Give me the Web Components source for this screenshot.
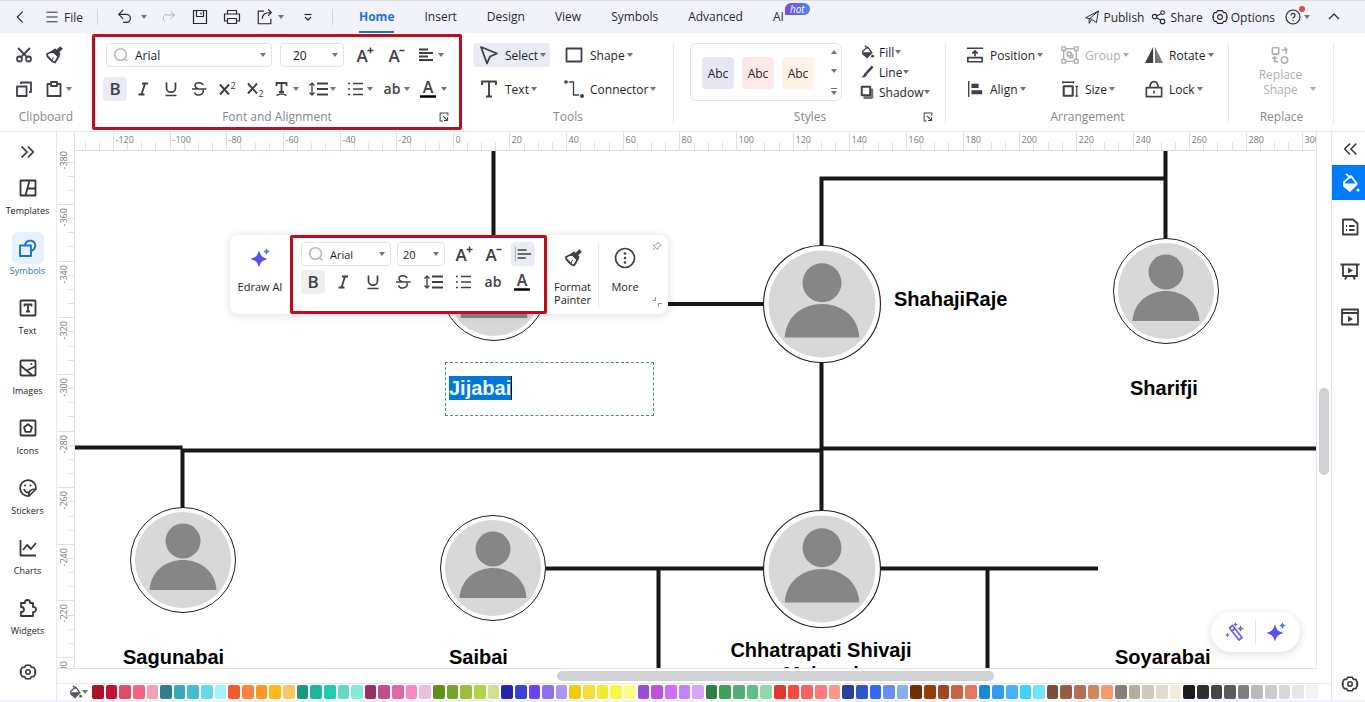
<!DOCTYPE html>
<html lang="en">
<head>
<meta charset="utf-8">
<meta name="viewport" content="width=device-width, initial-scale=1">
<title>Family tree - Edraw</title>
<style>
  html, body {
    height: 100%;
    margin: 0;
  }

  body {
    color: #26272b;
    font-family: 'Open Sans', 'Liberation Sans', sans-serif;
    font-size: 12px;
    overflow: hidden;
  }
</style>
</head>
<body>
<app-shell></app-shell>

<script>
const ICONS = {
  back: '<path d="M13 4 7 10l6 6" stroke-width="1.2"/>',
  menu: '<path d="M3 4h14M3 10h14M3 16h14" stroke-width="1.2"/>',
  undo: '<path d="M8 2 3 7l5 5M3 7h8.500a4.500 4.500 0 0 1 0 9H8" stroke-width="1.300"/>',
  redo: '<path d="M12 3l5 4.500-5 4.500M17 7.500H9a4 4 0 0 0-4 7.500" stroke-width="1.200"/>',
  save: '<path d="M3.500 3.500h13v13h-13zM6.500 3.500v6h7v-6M11 5.500v2" stroke-width="1.200"/>',
  print: '<path d="M5.500 7V3.500h9V7M5 14H2.500V7h15v7H15M5.500 11.500h9v5h-9z" stroke-width="1.200"/>',
  export: '<path d="M9 3.500H2.500v14h14V12M7 12c0-5 3-7 9-7M13.500 1.500 17 5l-3.500 3.500" stroke-width="1.300"/>',
  customize: '<path d="M6.500 7.500h7" stroke-width="1.200"/><path d="m7 10 3 3 3-3" stroke-width="1.200"/>',
  publish: '<path d="M2 11 18 2.500 15.500 17 9 12.500zM18 2.500 6.500 12.500V18l3-5" stroke-width="1.200"/>',
  share: '<circle cx="4.500" cy="9.500" r="2.800" stroke-width="1.400"/><circle cx="14.500" cy="4.500" r="2.300" stroke-width="1.400"/><circle cx="14.500" cy="15.500" r="2.800" stroke-width="1.400"/><path d="m7.500 8.500 5-2.500M7 11l5 3" stroke-width="1.400"/>',
  gear: '<path d="M7.500 2.500h5l1.300 2.300h2.700L18.500 9l-1.200 1 1.200 1-2 4.200h-2.700l-1.300 2.300h-5l-1.300-2.300H3.500L1.500 11l1.200-1-1.200-1 2-4.200h2.700z"/><circle cx="10" cy="10" r="2.500"/>',
  options: '<path d="M7 2h6l1.300 2.500h2.900L19 9l-1.200 1 1.200 1-1.800 4.500h-2.900L13 18H7l-1.300-2.500H2.800L1 11l1.200-1L1 9l1.800-4.500h2.900z" stroke-width="1.400"/><circle cx="10" cy="10" r="3" stroke-width="1.400"/>',
  help: '<circle cx="10" cy="10" r="7" stroke-width="1.200"/><path d="M8 8.500c0-3 4.200-2.500 4 0 0 1.500-2 1.300-2 3M10 13v1" stroke-width="1.200"/>',
  up: '<path d="m5 12 5-5 5 5" stroke-width="1.200"/>',
  cut: '<circle cx="5.500" cy="14" r="2.500"/><circle cx="14.500" cy="14" r="2.500"/><path d="m4 3 9 9M16 3l-9 9" />',
  painter: '<path d="m3 9 6-3 5.500 5.500-3.500 6-2.500-1-5-5z"/><path d="m9 6 2-1.500 4.500 4.500-1 2.500z" fill="currentColor"/><path d="m13.500 6.500 4-4" stroke-width="3.800"/><path d="m8 15 1.500-3" stroke-width="1"/>',
  copy: '<path d="M3 7.500h9.500V17H3zM7 5V3.500h10V13h-2"/>',
  paste: '<path d="M7 5H3.500v12h13V5H13M7 3h6v4H7z"/>',
  search: '<circle cx="9.500" cy="9.500" r="6.500"/><path d="m14 14 3 3"/>',
  grow: '<text x="8" y="17" font-size="17" font-weight="600">A</text><path d="M13.500 5.500h6M16.500 2.500v6" stroke-width="1.500"/>',
  shrink: '<text x="8" y="17" font-size="17" font-weight="600">A</text><path d="M13.500 5.500h5" stroke-width="1.500"/>',
  align: '<path d="M3 4.500h9M3 8h14M3 11.500h9M3 15h14" stroke-width="1.800"/>',
  left: '<path d="M1.500 2v16" stroke="#a2a5b0" stroke-width="1"/><path d="M4 5.500h10M4 10h15M4 14.500h9"/>',
  bold: '<text x="10" y="16" font-size="17" font-weight="600">B</text>',
  italic: '<path d="M9 4.500h6M5.500 15.500h6M12 4.500l-3.500 11" stroke-width="1.800"/>',
  underline: '<path d="M5.500 3.500V9c0 5.500 9 5.500 9 0V3.500M4.500 16.500h11" stroke-width="1.700"/>',
  strike: '<path d="M14 6c-1-3-8-3.500-8 .5 0 1.500 1 2.500 3 3.500M14 11c2 5-7 7-8.500 2.500M3 10h14.500" stroke-width="1.500"/>',
  superscript: '<path d="m3 5.500 9 10M12 5.500l-9 10" stroke-width="1.900"/><text x="16" y="10" font-size="9">2</text>',
  subscript: '<path d="m3 4.500 9 10M12 4.500l-9 10" stroke-width="1.900"/><text x="16" y="18" font-size="9">2</text>',
  texteffect: '<path d="M5.500 7V4h10v3M10.500 4v9M8 13h5" stroke-width="1.800"/><path d="M5.500 16.500q5-3 10 0" stroke-width="1.500"/>',
  spacing: '<path d="M4 4v12M1.500 6.500 4 4l2.500 2.500M1.500 13.500 4 16l2.500-2.500" stroke-width="1.300"/><path d="M9 4.500h11M9 10h11M9 15.500h11"/>',
  list: '<path d="M3 4.500h2M3 10h2M3 15.500h2M8 4.500h10M8 10h10M8 15.500h10" stroke-width="1.600"/>',
  ab: '<text x="10" y="15" font-size="14" font-weight="600">ab</text>',
  fontcolor: '<text x="9" y="14" font-size="16" font-weight="600">A</text><path d="M1 17.500h16" stroke="#000" stroke-width="2.500"/>',
  select: '<path d="M2 2 18 8.500 11 11.500 8 18.500z"/>',
  text: '<path d="M3 6V2.500h14V6M10 2.500v15M7 17.500h6" stroke-width="1.900"/>',
  shape: '<path d="M2.500 3.500h15v13h-15z"/>',
  connector: '<circle cx="2" cy="3" r="1.800" fill="currentColor" stroke="none"/><circle cx="18" cy="17" r="2" fill="currentColor" stroke="none"/><path d="M5 3h4.500v13H15" stroke-width="1.300"/>',
  fill: '<path d="m4 9 7-6 6 8-7 7-6-5z"/><path d="M3 10.500h14l-7 7.500z" fill="currentColor" stroke="none"/><path d="m7 1 4 4" /><circle cx="18" cy="16" r="2" fill="currentColor" stroke="none"/>',
  line: '<path d="m18 2-9 10" stroke-width="3.500"/><path d="M8 11c-3 0-1 4-6 6 4 1 8 0 8-4z" fill="currentColor" stroke="none"/>',
  shadow: '<path d="M17 5v13H5" stroke-width="4" stroke="#77797d"/><path d="M2.500 2.500h12v12h-12z" fill="#fff" stroke-width="2.800"/>',
  launcher: '<path d="M8 16.500H3.500v-13h13V8M8 8l8 8M16 10v6h-6" stroke-width="1.700"/>',
  position: '<path d="M1 2.500h18M10 11.500V6.500M7 8.500 10 5.500l3 3M2 13h16v4.500H2z" stroke-width="1.900"/>',
  alignobj: '<path d="M3 1v18" stroke-width="1.500"/><path d="M6 6.500h8M6 13.500h12" stroke-width="4.500"/>',
  group: '<path d="M3 3h14v14H3z" stroke-width="1.500"/><path d="M1 1h4v4H1zM15 1h4v4h-4zM1 15h4v4H1zM15 15h4v4h-4z" fill="#fff" stroke-width="1.500"/><path d="M7 7h4v4H7zM9 13h4V9" />',
  size: '<path d="M3 7h10v10.500H3z" stroke-width="2.300"/><path d="M2 2.500h12M2 1v3M14 1v3M17.500 7v11M16 7h3M16 18h3" stroke-width="1.400"/>',
  rotate: '<path d="M9 1v18H0z" fill="currentColor" stroke="none"/><path d="M11 1v18h9z" fill="#77797d" stroke="none"/>',
  lock: '<path d="M1.500 8.500h17v10h-17zM5.500 8.500c0-9 9-9 9 0M10 12v3"/>',
  replace: '<path d="M1.500 2h7v7h-7zM12 4.500h5M15 1.500l3 3M17 4.500V9M4 12v5.500h4M1.500 14 4 12l2.500 2"/><circle cx="15" cy="15.500" r="3.500"/>',
  expand: '<path d="m3 4 6 6-6 6M10 4l6 6-6 6" stroke-width="1.900"/>',
  collapse: '<path d="m10 4-6 6 6 6M17 4l-6 6 6 6" stroke-width="1.700"/>',
  templates: '<path d="M2.500 2.500h15v15h-15zM11.500 2.500l-4 15M9.500 10.500h8" stroke-width="1.800"/>',
  symbols: '<path d="M2 7.500h11v10.500H2zM7 7c1-7 12-5 10 2-.5 2-2 3.500-4 4" stroke-width="1.900"/>',
  textbox: '<rect x="2.500" y="2.500" width="15" height="15" rx="1"/><path d="M6.500 8.500V6.500h7v2M10 6.500v7M8 13.500h4"/>',
  images: '<rect x="2.500" y="2.500" width="15" height="15" rx="1"/><path d="m3 8 11 9M9 12.500l8-4"/><circle cx="13.500" cy="6" r="1" fill="currentColor" stroke="none"/>',
  icons: '<rect x="2.500" y="2.500" width="15" height="15" rx="1"/><path d="m10 6.200 4 3-1.500 4.600h-5L6 9.200z"/>',
  stickers: '<path d="M11 18a8 8 0 1 1 7-7zM11 18c-1-5 2-7 7-7M6 11c1 3 3 4 5 3" stroke-width="1.700"/><circle cx="7" cy="7.500" r="1" fill="currentColor" stroke="none"/><circle cx="12.500" cy="7.500" r="1" fill="currentColor" stroke="none"/>',
  charts: '<path d="M2.500 2v15.500H18M5 12l4-5 4 4 5-6"/>',
  widgets: '<path d="M3 5h4c-1-4 6-4 5 0h3v4c4-.5 4 5.500 0 5v4H3v-4c4 0 4-5 0-5z"/>',
  drop: '<path d="m4 9 7-6 6 8-7 7-6-5zM6 1l5 4" stroke-width="1.700"/><path d="M3 10.500h14l-7 7.500z" fill="currentColor" stroke="none"/><circle cx="18" cy="17" r="1.600" fill="currentColor" stroke="none"/>',
  page: '<path d="M3 2.500h10l4.500 4V17.500H3zM6 9h1M9 9h5.500M6 13h1M9 13h5.500"/>',
  present: '<path d="M.5 2.500h19M3 2.500v11.500h14V2.500M7 14l-2 3.500M13 14l2 3.500"/><path d="m8 5.500 5 3-5 3z" fill="currentColor" stroke="none"/>',
  play: '<path d="M2 2.500h16v15H2zM2 6h16"/><path d="m8 9 5 3-5 3z" fill="currentColor" stroke="none"/>',
  more: '<circle cx="10" cy="10" r="9.500" stroke-width="1.700"/><circle cx="10" cy="5.500" r="1.300" fill="currentColor" stroke="none"/><circle cx="10" cy="10" r="1.300" fill="currentColor" stroke="none"/><circle cx="10" cy="14.500" r="1.300" fill="currentColor" stroke="none"/>',
  sparkle: '<path d="M9 2.500c1.800 5.500 3 6.700 8.500 8.500-5.500 1.800-6.700 3-8.500 8.500C7.200 14 6 12.800.5 11 6 9.200 7.200 8 9 2.500z" fill="#5b50ee" stroke="none"/><path d="M16.500 0c.7 2.200 1.300 2.800 3.500 3.500-2.200.7-2.800 1.300-3.500 3.500-.7-2.200-1.300-2.800-3.500-3.500 2.200-.7 2.800-1.300 3.500-3.500z" fill="#4684dc" stroke="none"/>',
  wand: '<path d="m4.500 6 3-2.500L17 15.500l-3 2.500zM7 9l3-2.500" stroke="#6962d8" stroke-width="1.700"/><path d="m15.500 3 1 2.500 2.500 1-2.500 1-1 2.500-1-2.500-2.500-1 2.500-1zM2.500 10.500l.7 1.800 1.800.7-1.800.7-.7 1.800-.7-1.800L0 13l1.800-.7zM10.500 0l.7 1.800 1.800.7-1.800.7-.7 1.800-.7-1.800L8 2.500l1.800-.7z" fill="#7168d8" stroke="none"/>',
  pin: '<path d="M11 3.500 16.500 9l-2 .5-3 3-.5 3.500-7-7 3.500-.5 3-3zM7 13l-4 4" stroke-width="1.400"/>',
  resize: '<path d="M2 7.500h5.500V2M12.500 18v-5.500H18" stroke-width="1.600"/>'
}

const icon = (name, size = 20) =>
  /*html*/`<svg class="icon" viewBox="0 0 20 20" width="${size}" height="${size}" fill="none" stroke="currentColor" stroke-width="1.800" stroke-linejoin="round" aria-hidden="true">${ICONS[name]}</svg>`

const caret = () => /*html*/`<svg class="caret" viewBox="0 0 6 4" width="6" height="4" aria-hidden="true"><path d="M0 0h6L3 4z" fill="#717378"/></svg>`

const BASE = /*css*/`
  * { box-sizing: border-box; }
  button, select { font: inherit; color: inherit; margin: 0; border: 0; background: none; padding: 0; }
  .icon, .caret { display: block; flex: none; overflow: visible; }
  .icon text { fill: currentColor; stroke: none; text-anchor: middle; font-family: 'Open Sans', sans-serif; }
`

class ToolButton extends HTMLElement {

  constructor () {
    super()
    this.shadow = this.attachShadow({ mode: 'open' })
  }

  connectedCallback () {
    this.render()
  }

  render () {
    const label = this.getAttribute('label')
    const lines = label ? label.split('|').map(line => `<span>${line}</span>`).join('') : ''
    const title = this.getAttribute('title') || (label || '').replace('|', ' ')

    this.shadow.innerHTML =
    /*html*/`
    <style>
      ${BASE}
      :host { display: block; flex: none; min-width: 24px; color: #3f4045; }

      button {
        align-items: center;
        border-radius: 4px;
        display: flex;
        gap: 2px;
        height: 100%;
        min-height: 24px;
        min-width: 100%;
        white-space: nowrap;
      }

      :host([plain]) button { justify-content: center; }
      :host([active]) button { background: #e9ebf5; }
      :host([gray]) button { background: #efeff0; }
      :host([label]) button { gap: 6px; padding: 0 4px 0 6px; }
      :host([label]) .caret { margin-left: -4px; }
      :host([tight]) button { gap: 5px; padding: 0; min-height: 20px; }
      :host([stacked]) button { flex-direction: column; gap: 12px; justify-content: flex-start; padding: 0; }
      :host([stacked]) { font-size: 11px; }
      .label { color: #232428; display: flex; flex-direction: column; line-height: 13px; text-align: center; }
      :host([disabled]) { color: #aeafb3; }
      :host([disabled]) .label { color: #aeafb3; }
      :host([disabled]) .caret { opacity: .6; }
    </style>

    <button type="button" aria-label="${title}" ${this.hasAttribute('disabled') ? 'disabled' : ''}>
      ${icon(this.getAttribute('icon'), this.getAttribute('size') || 20)}
      ${lines ? `<span class="label">${lines}</span>` : ''}
      ${this.hasAttribute('caret') ? caret() : ''}
    </button>
    `
  }
}

class ComboBox extends HTMLElement {

  constructor () {
    super()
    this.shadow = this.attachShadow({ mode: 'open' })
  }

  connectedCallback () {
    const search = this.hasAttribute('search')

    this.shadow.innerHTML =
    /*html*/`
    <style>
      ${BASE}
      :host { display: block; flex: none; height: 24px; }

      label {
        align-items: center;
        border: 1px solid #e2e3e8;
        border-radius: 4px;
        display: grid;
        grid-template-columns: ${search ? '18px 1fr 6px' : '1fr 6px'};
        gap: 5px;
        height: 100%;
        padding: 0 5px 0 var(--inset, 5px);
      }

      .icon { color: #b9bbc0; }
      select { appearance: none; color: #1b1c1f; min-width: 0; outline: none; }
    </style>

    <label>
      ${search ? icon('search', 18) : ''}
      <select aria-label="${this.getAttribute('name')}"><option>${this.getAttribute('value')}</option></select>
      ${caret()}
    </label>
    `
  }
}

class TitleBar extends HTMLElement {

  constructor () {
    super()
    this.shadow = this.attachShadow({ mode: 'open' })
    this.tabs = ['Home', 'Insert', 'Design', 'View', 'Symbols', 'Advanced', 'AI']
  }

  connectedCallback () {
    this.shadow.innerHTML =
    /*html*/`
    <style>
      ${BASE}
      :host {
        align-items: stretch;
        background: #f2f3fa;
        border-top: 1px solid #dcdde5;
        display: flex;
        height: 33px;
      }

      .quick, .actions { align-items: center; display: flex; flex: none; }
      .quick { padding-left: 11px; width: 345px; }
      .quick button, .actions button { align-items: center; display: flex; height: 24px; }
      .file { gap: 4px; margin: 0 14px 0 15px; }
      .sep { background: #d5d6dd; height: 16px; width: 1px; }
      .undo { gap: 7px; margin-left: 18px; }
      .redo { color: #b0b2b9; margin-left: 14px; }
      .save { margin-left: 13px; }
      .print { margin-left: 12px; }
      .export { gap: 4px; margin-left: 14px; }
      .custom { margin: 0 14px; }

      nav { display: flex; flex: 1; gap: 30px; padding-left: 14px; }
      a { align-items: center; border-bottom: 2px solid transparent; color: inherit; display: flex; padding-top: 1px; position: relative; text-decoration: none; }
      a.current { border-color: #1a6fd0; color: #1b74d2; font-weight: 700; }

      .hot {
        background: linear-gradient(90deg, #7b4be0, #4a84ee);
        border-radius: 6px 6px 6px 0;
        color: #fff;
        font-size: 10px;
        font-style: italic;
        left: 12px;
        line-height: 12px;
        padding: 0 5px;
        position: absolute;
        top: 2px;
      }

      .actions { padding-right: 21px; }
      .actions button { gap: 3px; }
      .share { margin-left: 7px; }
      .options { margin-left: 9px; }
      .actions .help { gap: 1px; margin-left: 8px; position: relative; }
      .help i { background: #e2494d; border-radius: 3px; height: 6px; left: 16px; position: absolute; top: 1px; width: 6px; }
      .actions .fold { margin-left: 14px; }
    </style>

    <div class="quick">
      <button type="button" aria-label="Back">${icon('back', 18)}</button>
      <button type="button" class="file">${icon('menu', 16)}File</button>
      <span class="sep"></span>
      <button type="button" class="undo" aria-label="Undo">${icon('undo', 18)}${caret()}</button>
      <button type="button" class="redo" aria-label="Redo">${icon('redo', 16)}</button>
      <button type="button" class="save" aria-label="Save">${icon('save')}</button>
      <button type="button" class="print" aria-label="Print">${icon('print')}</button>
      <button type="button" class="export" aria-label="Export">${icon('export', 18)}${caret()}</button>
      <button type="button" class="custom" aria-label="Customize">${icon('customize')}</button>
      <span class="sep"></span>
    </div>

    <nav>
      ${this.tabs.map((tab, i) => `<a href="#${tab}" class="${i ? '' : 'current'}">${tab}${tab === 'AI' ? '<span class="hot">hot</span>' : ''}</a>`).join('')}
    </nav>

    <div class="actions">
      <button type="button">${icon('publish', 16)}Publish</button>
      <button type="button" class="share">${icon('share', 16)}Share</button>
      <button type="button" class="options">${icon('options', 16)}Options</button>
      <button type="button" class="help" aria-label="Help">${icon('help')}${caret()}<i></i></button>
      <button type="button" class="fold" aria-label="Collapse ribbon">${icon('up')}</button>
    </div>
    `
  }
}

class RibbonGroup extends HTMLElement {

  constructor () {
    super()
    this.shadow = this.attachShadow({ mode: 'open' })
  }

  connectedCallback () {
    this.shadow.innerHTML =
    /*html*/`
    <style>
      ${BASE}
      :host { display: flex; flex: none; flex-direction: column; height: 97px; padding-top: 10px; position: relative; }
      :host([marked]) { outline: 3px solid #c00d17; outline-offset: -3px; border-radius: 2px; margin-top: 1px; height: 96px; padding-top: 9px; }
      :host([rule]) { background: linear-gradient(#e8e9ee, #e8e9ee) right 10px / 1px 80px no-repeat; }
      .body { height: 58px; }
      .foot { align-items: center; color: #85878d; display: grid; grid-template-columns: 1fr auto 1fr; height: 16px; margin-top: 7px; padding-right: 12px; padding-left: 12px; }
      .foot button { color: #3f4045; grid-column: 3; justify-self: end; }
    </style>

    <div class="body"><slot></slot></div>
    <div class="foot">
      <span></span><span>${this.getAttribute('name')}</span>
      ${this.hasAttribute('launcher') ? `<button type="button" aria-label="${this.getAttribute('name')} settings">${icon('launcher', 12)}</button>` : ''}
    </div>
    `
  }
}

class RibbonBar extends HTMLElement {

  constructor () {
    super()
    this.shadow = this.attachShadow({ mode: 'open' })
  }

  connectedCallback () {
    this.shadow.innerHTML =
    /*html*/`
    <style>
      ${BASE}
      :host { background: #fff; border-bottom: 1px solid #e7e8ec; display: flex; height: 99px; overflow: hidden; }
      .clipboard { width: 92px; }
      .font { width: 370px; }
      .tools { width: 212px; }
      .styles { width: 272px; }
      .arrange { width: 283px; }
      .replace { width: 105px; }

      .grid { display: grid; gap: 10px 8px; justify-content: start; }
      .clipboard .grid { grid-template-columns: 24px 32px; padding-left: 12px; }
      .rows { display: flex; flex-direction: column; gap: 10px; padding-left: 11px; }
      .row { display: flex; gap: 4px; }
      .row.first { gap: 8px; padding-left: 3px; }
      .row tool-button[caret] { width: 33px; }
      .font-name { width: 166px; }
      .font-size { --inset: 12px; width: 64px; }
      .tools .grid { grid-template-columns: 77px auto; padding-left: 11px; }
      .tools tool-button { justify-self: start; }

      .styles-body { display: flex; gap: 18px; padding-left: 16px; }
      .gallery { border: 1px solid #e4e5ea; border-radius: 6px; display: flex; gap: 8px; height: 58px; padding: 13px 4px 0 11px; width: 152px; }
      .gallery > button { border-radius: 4px; color: #232428; height: 32px; width: 32px; }
      .arrows { align-items: center; display: flex; flex-direction: column; gap: 15px; margin: -7px 0 0 auto; }
      .arrows button { display: block; line-height: 0; }
      .arrows .flip { transform: rotate(180deg); }
      .arrows .all { border-top: 1px solid #717378; padding-top: 2px; }
      .effects { display: flex; flex-direction: column; margin-top: -1px; }

      .arrange .grid { grid-template-columns: 87px 76px auto; padding-left: 14px; }
      .replace-body { align-items: flex-end; display: flex; justify-content: center; padding-left: 12px; }
      .replace-body button { color: #aeafb3; font-size: 12px; line-height: 15px; }
      .replace-body .icon { margin: 3px auto 3px; }
      .replace-body .caret { margin: 0 0 6px 8px; opacity: .6; }
    </style>

    <ribbon-group class="clipboard" name="Clipboard">
      <div class="grid">
        <tool-button plain icon="cut" title="Cut"></tool-button>
        <tool-button icon="painter" title="Format painter"></tool-button>
        <tool-button plain icon="copy" title="Copy"></tool-button>
        <tool-button icon="paste" caret title="Paste"></tool-button>
      </div>
    </ribbon-group>

    <ribbon-group class="font" name="Font and Alignment" launcher marked>
      <div class="rows">
        <div class="row first">
          <combo-box class="font-name" search name="Font" value="Arial"></combo-box>
          <combo-box class="font-size" name="Font size" value="20"></combo-box>
          <tool-button plain icon="grow" title="Increase font size"></tool-button>
          <tool-button plain icon="shrink" title="Decrease font size"></tool-button>
          <tool-button icon="align" caret title="Alignment"></tool-button>
        </div>
        <div class="row">
          <tool-button plain active icon="bold" title="Bold"></tool-button>
          <tool-button plain icon="italic" title="Italic"></tool-button>
          <tool-button plain icon="underline" title="Underline"></tool-button>
          <tool-button plain icon="strike" title="Strikethrough"></tool-button>
          <tool-button plain icon="superscript" title="Superscript"></tool-button>
          <tool-button plain icon="subscript" title="Subscript"></tool-button>
          <tool-button icon="texteffect" caret title="Text effects"></tool-button>
          <tool-button icon="spacing" caret title="Line spacing"></tool-button>
          <tool-button icon="list" caret title="Bullets"></tool-button>
          <tool-button icon="ab" caret title="Change case"></tool-button>
          <tool-button icon="fontcolor" caret title="Font color"></tool-button>
        </div>
      </div>
    </ribbon-group>

    <ribbon-group class="tools" name="Tools" rule>
      <div class="grid">
        <tool-button active icon="select" label="Select" caret></tool-button>
        <tool-button icon="shape" label="Shape" caret></tool-button>
        <tool-button icon="text" label="Text" caret></tool-button>
        <tool-button icon="connector" label="Connector" caret></tool-button>
      </div>
    </ribbon-group>

    <ribbon-group class="styles" name="Styles" launcher rule>
      <div class="styles-body">
        <div class="gallery">
          <button type="button" style="background: #e7e6f4">Abc</button>
          <button type="button" style="background: #fde8e9">Abc</button>
          <button type="button" style="background: #fff3e4">Abc</button>
          <div class="arrows">
            <button type="button" class="flip" aria-label="Previous">${caret()}</button>
            <button type="button" aria-label="Next">${caret()}</button>
            <button type="button" class="all" aria-label="All styles">${caret()}</button>
          </div>
        </div>
        <div class="effects">
          <tool-button tight icon="fill" size="14" label="Fill" caret></tool-button>
          <tool-button tight icon="line" size="14" label="Line" caret></tool-button>
          <tool-button tight icon="shadow" size="14" label="Shadow" caret></tool-button>
        </div>
      </div>
    </ribbon-group>

    <ribbon-group class="arrange" name="Arrangement" rule>
      <div class="grid">
        <tool-button icon="position" size="18" label="Position" caret></tool-button>
        <tool-button disabled icon="group" size="18" label="Group" caret></tool-button>
        <tool-button icon="rotate" size="18" label="Rotate" caret></tool-button>
        <tool-button icon="alignobj" size="18" label="Align" caret></tool-button>
        <tool-button icon="size" size="18" label="Size" caret></tool-button>
        <tool-button icon="lock" size="18" label="Lock" caret></tool-button>
      </div>
    </ribbon-group>

    <ribbon-group class="replace" name="Replace" rule>
      <div class="replace-body">
        <button type="button" disabled>${icon('replace', 18)}Replace<br>Shape</button>
        ${caret()}
      </div>
    </ribbon-group>
    `
  }
}

class SideNav extends HTMLElement {

  constructor () {
    super()
    this.shadow = this.attachShadow({ mode: 'open' })
    this.items = ['Templates', 'Symbols', 'Text', 'Images', 'Icons', 'Stickers', 'Charts', 'Widgets']
  }

  connectedCallback () {
    this.shadow.innerHTML =
    /*html*/`
    <style>
      ${BASE}
      :host { border-right: 1px solid #e7e8ec; color: #36373b; display: flex; flex-direction: column; font-size: 9px; }
      button { align-items: center; display: flex; flex: none; flex-direction: column; height: 60px; line-height: 13px; width: 55px; }
      .toggle, .settings { height: 40px; justify-content: center; }
      .box { border-radius: 6px; display: grid; height: 32px; place-items: center; width: 32px; }
      .label { color: #1c1d20; }
      .current { color: #1b76bd; }
      .current .box { background: #e6f1fc; }
      .current .label { color: #1b76bd; }
    </style>

    <button type="button" class="toggle" aria-label="Expand">${icon('expand', 18)}</button>
    ${this.items.map(name => `
      <button type="button" class="${name === 'Symbols' ? 'current' : ''}">
        <span class="box">${icon(name === 'Text' ? 'textbox' : name.toLowerCase())}</span>
        <span class="label">${name}</span>
      </button>`).join('')}
    <button type="button" class="settings" aria-label="Settings">${icon('gear', 18)}</button>
    `
  }
}

class PanelRail extends HTMLElement {

  constructor () {
    super()
    this.shadow = this.attachShadow({ mode: 'open' })
  }

  connectedCallback () {
    this.shadow.innerHTML =
    /*html*/`
    <style>
      ${BASE}
      :host { border-left: 1px solid #e7e8ec; color: #3a3b40; display: flex; flex-direction: column; }
      button { display: grid; height: 45px; padding-left: 2px; place-items: center; width: 100%; }
      .toggle { height: 33px; }
      .settings { height: 32px; margin-top: auto; }
      .current { background: #007bff; color: #fff; height: 35px; margin-bottom: 4px; }
    </style>

    <button type="button" class="toggle" aria-label="Collapse">${icon('collapse', 18)}</button>
    <button type="button" class="current" aria-label="Fill">${icon('drop')}</button>
    <button type="button" aria-label="Page">${icon('page')}</button>
    <button type="button" aria-label="Presentation">${icon('present')}</button>
    <button type="button" aria-label="Slides">${icon('play')}</button>
    <button type="button" class="settings" aria-label="Settings">${icon('gear', 18)}</button>
    `
  }
}

class PageRuler extends HTMLElement {

  constructor () {
    super()
    this.shadow = this.attachShadow({ mode: 'open' })
  }

  connectedCallback () {
    this.observer = new ResizeObserver(() => this.render())
    this.observer.observe(this)
  }

  disconnectedCallback () {
    this.observer.disconnect()
  }

  // 20 units of the page are 56.64 pixels, with four ticks in each step
  render () {
    const vertical = this.hasAttribute('vertical')
    const first = Number(this.getAttribute('first'))
    const start = Number(this.getAttribute('start'))
    const length = vertical ? this.clientHeight : this.clientWidth
    let marks = ''

    for (let i = -4; start + i * 14.16 < length; i++) {
      const at = Math.round(start + i * 14.16)
      const major = i % 4 === 0
      const from = major ? 0 : 10

      if (at > 0) {
        marks += vertical ? `<path d="M${from} ${at}h18"/>` : `<path d="M${at} ${from}v18"/>`
      }

      if (major && at > -10) {
        const value = first + i * 5
        marks += vertical
          ? `<text transform="translate(9 ${at + 22}) rotate(-90)">${value}</text>`
          : `<text x="${at + 2}" y="10">${value}</text>`
      }
    }

    this.shadow.innerHTML =
    /*html*/`
    <style>
      :host { display: block; overflow: hidden; }
      svg { display: block; height: 100%; width: 100%; }
      g { transform: translate(.5px, .5px); }
      path { fill: none; stroke: #dfe0e4; }
      text { fill: #77797f; font-size: 9px; }
    </style>
    <svg><g>${marks}</g></svg>
    `
  }
}

class PersonAvatar extends HTMLElement {

  constructor () {
    super()
    this.shadow = this.attachShadow({ mode: 'open' })
  }

  connectedCallback () {
    this.shadow.innerHTML =
    /*html*/`
    <style>
      :host { display: block; height: 106px; width: 106px; }
      :host([large]) { height: 118px; width: 118px; }
      svg { display: block; height: 100%; width: 100%; }
    </style>
    <svg viewBox="-53 -53 106 106" role="img" aria-label="Person">
      <circle r="52.500" fill="#fff" stroke="#1b1c30"/>
      <circle r="48" fill="#d8d8d8"/>
      <circle cy="-19" r="17.500" fill="#868686"/>
      <path d="M-33.500 30C-31-10 31-10 33.500 30z" fill="#868686"/>
    </svg>
    `
  }
}

class FloatingToolbar extends HTMLElement {

  constructor () {
    super()
    this.shadow = this.attachShadow({ mode: 'open' })
  }

  connectedCallback () {
    this.shadow.innerHTML =
    /*html*/`
    <style>
      ${BASE}
      :host { background: #fff; border-radius: 8px; box-shadow: 0 1px 8px rgba(30, 32, 50, .16); display: flex; height: 79px; width: 438px; }
      .side { padding-top: 13px; width: 60px; }
      .format { border: 3px solid #c00d17; border-radius: 2px; display: flex; flex-direction: column; gap: 4px; padding: 4px 8px; width: 257px; }
      .row { display: flex; gap: 6px; }
      combo-box { font-size: 11px; }
      .font-name { width: 90px; }
      .font-size { width: 48px; }
      .painter { border-right: 1px solid #e8e9ee; height: 64px; margin-top: 8px; padding-top: 5px; width: 52px; }
      .more { padding-top: 13px; width: 52px; }
      .corner { color: #85878d; display: flex; flex-direction: column; justify-content: space-between; padding: 5px 0 6px; }
      .corner button { display: block; }
    </style>

    <div class="side"><tool-button stacked icon="sparkle" label="Edraw AI"></tool-button></div>
    <div class="format">
      <div class="row">
        <combo-box class="font-name" search name="Font" value="Arial"></combo-box>
        <combo-box class="font-size" name="Font size" value="20"></combo-box>
        <tool-button plain icon="grow" title="Increase font size"></tool-button>
        <tool-button plain icon="shrink" title="Decrease font size"></tool-button>
        <tool-button plain active icon="left" size="18" title="Align left"></tool-button>
      </div>
      <div class="row">
        <tool-button plain gray icon="bold" title="Bold"></tool-button>
        <tool-button plain icon="italic" title="Italic"></tool-button>
        <tool-button plain icon="underline" title="Underline"></tool-button>
        <tool-button plain icon="strike" title="Strikethrough"></tool-button>
        <tool-button plain icon="spacing" title="Line spacing"></tool-button>
        <tool-button plain icon="list" title="Bullets"></tool-button>
        <tool-button plain icon="ab" title="Change case"></tool-button>
        <tool-button plain icon="fontcolor" title="Font color"></tool-button>
      </div>
    </div>
    <div class="painter"><tool-button stacked icon="painter" label="Format|Painter"></tool-button></div>
    <div class="more"><tool-button stacked icon="more" label="More"></tool-button></div>
    <div class="corner">
      <button type="button" aria-label="Pin">${icon('pin', 12)}</button>
      <button type="button" aria-label="Resize">${icon('resize', 12)}</button>
    </div>
    `
  }
}

class AssistantPill extends HTMLElement {

  constructor () {
    super()
    this.shadow = this.attachShadow({ mode: 'open' })
  }

  connectedCallback () {
    this.shadow.innerHTML =
    /*html*/`
    <style>
      ${BASE}
      :host { align-items: center; background: #fff; border-radius: 20px; box-shadow: 0 2px 8px rgba(30, 32, 50, .16); display: flex; height: 40px; justify-content: center; gap: 10px; width: 89px; }
      button { display: block; }
      span { background: #e3e4e9; height: 24px; width: 1px; }
    </style>
    <button type="button" aria-label="Magic tools">${icon('wand')}</button>
    <span></span>
    <button type="button" aria-label="Assistant">${icon('sparkle')}</button>
    `
  }
}

class DiagramCanvas extends HTMLElement {

  constructor () {
    super()
    this.shadow = this.attachShadow({ mode: 'open' })

    this.people = [
      { left: 366, top: 84 },
      { left: 688, top: 94, large: true },
      { left: 1038, top: 87 },
      { left: 55, top: 356 },
      { left: 365, top: 364 },
      { left: 688, top: 359, large: true }
    ]

    this.names = [
      { text: 'ShahajiRaje', left: 819, top: 136 },
      { text: 'Sharifji', left: 1055, top: 225 },
      { text: 'Sagunabai', left: 48, top: 494 },
      { text: 'Saibai', left: 374, top: 494 },
      { text: 'Chhatrapati Shivaji<br>Maharaj', left: 646, top: 487, width: 200 },
      { text: 'Soyarabai', left: 1040, top: 494 }
    ]
  }

  connectedCallback () {
    this.shadow.innerHTML =
    /*html*/`
    <style>
      ${BASE}
      :host { background: #fff; display: block; overflow: hidden; position: relative; }
      .lines { display: block; height: 100%; width: 100%; }
      .lines path { fill: none; stroke: #18181a; stroke-width: 4; }
      person-avatar, .name, .editor, floating-toolbar, assistant-pill { position: absolute; }

      .name, .editor {
        color: #000;
        font-family: 'Liberation Sans', Arial, sans-serif;
        font-size: 20px;
        font-weight: 700;
        line-height: 24px;
      }

      .name { text-align: center; }
      .editor { border: 1px dashed #54869a; height: 54px; left: 370px; padding: 13px 3px; top: 211px; width: 209px; }
      mark { background: #0078d7; border-right: 1px solid #000; color: #f2fbff; display: inline-block; }
      floating-toolbar { left: 155px; top: 84px; }
      assistant-pill { bottom: 16px; right: 16px; }
    </style>

    <svg class="lines">
      <path d="M418.500 0V100M593 153H690M746.500 100V27.500H1090M1090.500 0V90M746.500 210V362"/>
      <path d="M0 296.500H107.500M107.500 360V299.500H747M747 297.500H3000"/>
      <path d="M470 417.500H690M804 417.500H1023M583.500 417.500V600M912.500 417.500V600"/>
    </svg>

    ${this.people.map(p => `<person-avatar ${p.large ? 'large' : ''} style="left: ${p.left}px; top: ${p.top}px"></person-avatar>`).join('')}
    ${this.names.map(n => `<div class="name" style="left: ${n.left}px; top: ${n.top}px${n.width ? `; width: ${n.width}px` : ''}">${n.text}</div>`).join('')}
    <div class="editor"><mark>Jijabai</mark></div>
    <floating-toolbar></floating-toolbar>
    <assistant-pill></assistant-pill>
    `
  }
}

class ColorPalette extends HTMLElement {

  constructor () {
    super()
    this.shadow = this.attachShadow({ mode: 'open' })

    this.colors = `
      ab1425 c8102e e34c67 f2647f f4a0b1 2b7f8e 38a8bb 42bdd8 66d9e8 a8f0fb
      f15a29 fc8340 fb9620 fdba16 fcc566 1a9880 1bb69b 20cbad 68d6c4 85ead6
      9c2e63 c24b8c df67aa f987c8 ecc0dc 5f8e1b 76a32a 9cc032 b2d34c d0e08e
      2327a8 3643d3 6c43ef 8c70f2 ae94f5 f8cb08 f9dc36 f0ec2d fbf54a fbfd86
      9b4cd4 c153e0 d06cf8 be84fb d8a4fa 2f7e44 41a058 52ad76 60be88 93d6ab
      e2372f f84a40 fb6265 fd7a79 fd938a 26409c 2f55cb 3568ed 688dfb 88aef0
      6f2f06 983b04 a64426 cb6241 e07859 1d88d2 2f9df2 46b2fc 3fd0fb 6fe4fc
      7a4e38 965f45 b07150 d18560 f29b70 8b7f79 b2ae9c cecbbb e3dccd f3ecda
      1a1a1a 303030 464646 5b5b5b 7f7f7f bababa cbcbcb d9d9d9 e7e7e7 f2f2f2
    `.trim().split(/\s+/)
  }

  connectedCallback () {
    this.shadow.innerHTML =
    /*html*/`
    <style>
      ${BASE}
      :host { align-items: center; border-top: 1px solid #e7e8ec; color: #55575c; display: flex; height: 17px; padding: 0 13px 0 11px; }
      .bucket { align-items: center; display: flex; flex: none; width: 24px; }
      .swatches { display: flex; flex: 1; gap: 2px; height: 14px; }
      .swatches button { border-radius: 2px; flex: 1; min-width: 0; }
    </style>
    <button type="button" class="bucket" aria-label="Fill color">${icon('fill', 14)}${caret()}</button>
    <div class="swatches">
      ${this.colors.map(c => `<button type="button" aria-label="#${c}" style="background: #${c}"></button>`).join('')}
    </div>
    `
  }
}

class AppShell extends HTMLElement {

  constructor () {
    super()
    this.shadow = this.attachShadow({ mode: 'open' })
  }

  connectedCallback () {
    this.shadow.innerHTML =
    /*html*/`
    <style>
      * { box-sizing: border-box; }
      :host { background: #f2f3fa; box-sizing: border-box; display: flex; flex-direction: column; height: 100vh; padding-bottom: 2px; }
      title-bar, ribbon-bar { flex: none; }
      .work { background: #fff; display: grid; flex: 1; grid-template-columns: 57px 1fr 34px; min-height: 0; }
      side-nav, panel-rail { min-height: 0; overflow: hidden; }

      .stage {
        display: grid;
        grid-template-columns: 18px 1fr 14px;
        grid-template-rows: 19px 1fr 15px auto;
        min-height: 0;
        min-width: 0;
      }

      .corner, .side { border-right: 1px solid #e0e1e5; }
      .top { border-bottom: 1px solid #e0e1e5; grid-column: 2; }
      diagram-canvas { min-width: 0; }
      .top, diagram-canvas { border-right: 1px solid #e7e8ec; }
      .side, diagram-canvas, .vertical { grid-row: 2; min-height: 0; }
      .vertical { grid-column: 3; padding: 237px 2px 0; }
      .vertical i { background: #d0d1d4; border-radius: 5px; display: block; height: 87px; }
      .horizontal { border-top: 1px solid #e0e1e5; grid-column: 1 / 3; grid-row: 3; padding: 2px 323px 2px 500px; }
      .horizontal i { background: #d0d1d4; border-radius: 5px; display: block; height: 10px; }
      color-palette { grid-column: 1 / 4; grid-row: 4; }
    </style>

    <title-bar></title-bar>
    <ribbon-bar></ribbon-bar>
    <div class="work">
      <side-nav></side-nav>
      <div class="stage">
        <div class="corner"></div>
        <page-ruler class="top" first="-120" start="38"></page-ruler>
        <page-ruler class="side" vertical first="-360" start="53"></page-ruler>
        <diagram-canvas></diagram-canvas>
        <div class="vertical"><i></i></div>
        <div class="horizontal"><i></i></div>
        <color-palette></color-palette>
      </div>
      <panel-rail></panel-rail>
    </div>
    `
  }
}

customElements.define('tool-button', ToolButton)
customElements.define('combo-box', ComboBox)
customElements.define('title-bar', TitleBar)
customElements.define('ribbon-group', RibbonGroup)
customElements.define('ribbon-bar', RibbonBar)
customElements.define('side-nav', SideNav)
customElements.define('panel-rail', PanelRail)
customElements.define('page-ruler', PageRuler)
customElements.define('person-avatar', PersonAvatar)
customElements.define('floating-toolbar', FloatingToolbar)
customElements.define('assistant-pill', AssistantPill)
customElements.define('diagram-canvas', DiagramCanvas)
customElements.define('color-palette', ColorPalette)
customElements.define('app-shell', AppShell)
</script>
</body>
</html>
